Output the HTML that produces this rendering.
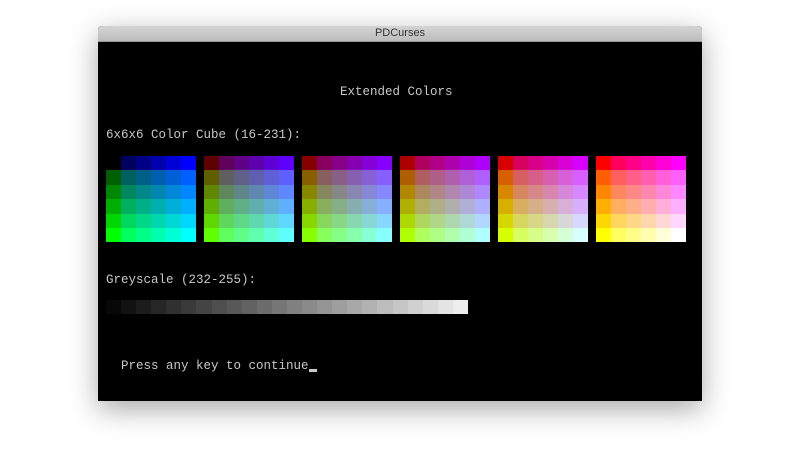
<!DOCTYPE html>
<html><head><meta charset="utf-8"><style>
body{margin:0;width:800px;height:450px;background:#fff;position:relative;overflow:hidden;font-family:"Liberation Mono",monospace}
#win{position:absolute;left:98px;top:26px;width:604px;height:375px;background:#000;box-shadow:0 8px 28px rgba(0,0,0,.35);border-radius:4px 4px 0 0;overflow:hidden}
#tb{position:absolute;left:0;top:0;width:604px;height:15px;background:linear-gradient(#d4d4d4,#bdbdbd);border-bottom:1px solid #999;font:11px "Liberation Sans",sans-serif;color:#333;text-align:center;line-height:15px}
.t{position:absolute;color:#c8c8c8;font-size:12.5px;white-space:pre;line-height:14px}
.c{position:absolute}
</style></head><body>
<div id="win"><div id="tb">PDCurses</div></div>
<div class="t" style="left:340px;top:85px">Extended Colors</div>
<div class="t" style="left:106px;top:128px">6x6x6 Color Cube (16-231):</div>
<div class="t" style="left:106px;top:273px">Greyscale (232-255):</div>
<div class="t" style="left:121px;top:359px">Press any key to continue</div>
<div class="c" style="left:309px;top:369px;width:8px;height:3px;background:#c8c8c8"></div>
<div id="g"></div>
<script>
var L=[0,95,135,175,215,255],h='';
for(var r=0;r<6;r++)for(var g=0;g<6;g++)for(var b=0;b<6;b++){
if(r==0&&g==0&&b==0)continue;
var x=106+r*98+b*15,y=156+Math.round(g*14.4),y2=156+Math.round((g+1)*14.4);
h+='<div class="c" style="left:'+x+'px;top:'+y+'px;width:15px;height:'+(y2-y)+'px;background:rgb('+L[r]+','+L[g]+','+L[b]+')"></div>';}
for(var i=0;i<24;i++){var v=8+10*i,x1=106+Math.round(i*15.08),x2=106+Math.round((i+1)*15.08);h+='<div class="c" style="left:'+x1+'px;top:300px;width:'+(x2-x1)+'px;height:14px;background:rgb('+v+','+v+','+v+')"></div>';}
document.getElementById('g').innerHTML=h;
</script>
</body></html>
